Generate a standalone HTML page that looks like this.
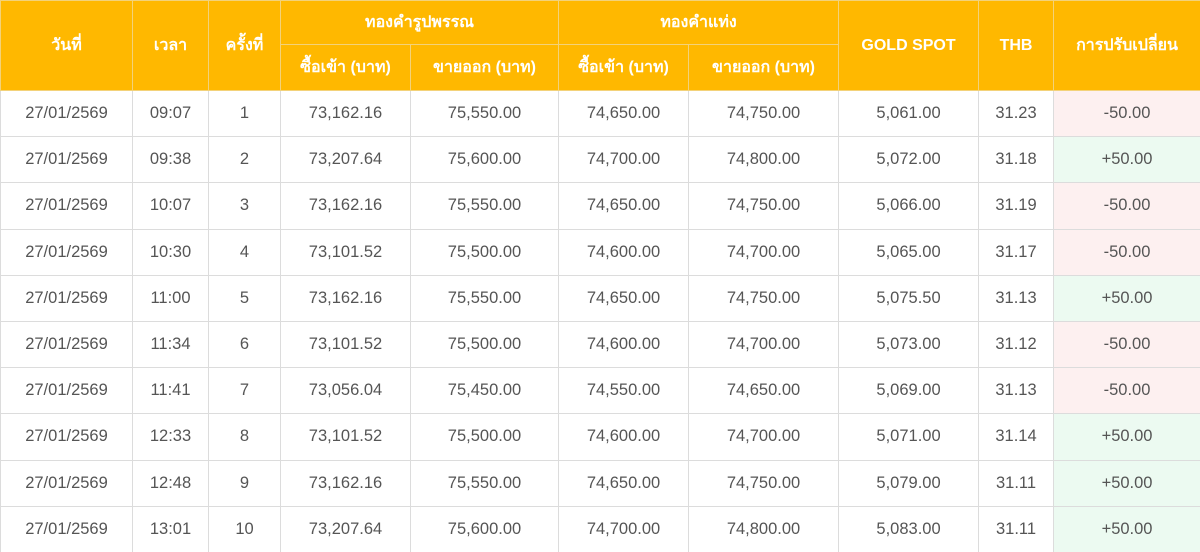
<!DOCTYPE html>
<html><head><meta charset="utf-8"><style>
html,body{margin:0;padding:0;width:1200px;height:552px;overflow:hidden;background:#fff}
table{border-collapse:collapse;table-layout:fixed;width:1200px;font-family:"Liberation Sans","DejaVu Sans",sans-serif}
th{background:#FFB800;color:#fff;font-weight:bold;font-size:16px;border:1px solid #f3d27a;padding:0;text-align:center}
td{color:#555;font-size:16.5px;text-align:center;border:1px solid #dcdcdc;padding:0;height:45.2px}
tr.h1 th{height:43px}
tr.h2 th{height:45px}
td.r{background:#fdf0f0}
td.g{background:#ecfaf1}
</style></head><body>
<table>
<colgroup><col style="width:132px"><col style="width:76px"><col style="width:72px"><col style="width:130px"><col style="width:148px"><col style="width:130px"><col style="width:150px"><col style="width:140px"><col style="width:75px"><col style="width:147px"></colgroup>
<tr class="h1"><th rowspan="2">วันที่</th><th rowspan="2">เวลา</th><th rowspan="2">ครั้งที่</th><th colspan="2">ทองคำรูปพรรณ</th><th colspan="2">ทองคำแท่ง</th><th rowspan="2">GOLD SPOT</th><th rowspan="2">THB</th><th rowspan="2">การปรับเปลี่ยน</th></tr>
<tr class="h2"><th>ซื้อเข้า (บาท)</th><th>ขายออก (บาท)</th><th>ซื้อเข้า (บาท)</th><th>ขายออก (บาท)</th></tr>
<tr><td>27/01/2569</td><td>09:07</td><td>1</td><td>73,162.16</td><td>75,550.00</td><td>74,650.00</td><td>74,750.00</td><td>5,061.00</td><td>31.23</td><td class="r">-50.00</td></tr>
<tr><td>27/01/2569</td><td>09:38</td><td>2</td><td>73,207.64</td><td>75,600.00</td><td>74,700.00</td><td>74,800.00</td><td>5,072.00</td><td>31.18</td><td class="g">+50.00</td></tr>
<tr><td>27/01/2569</td><td>10:07</td><td>3</td><td>73,162.16</td><td>75,550.00</td><td>74,650.00</td><td>74,750.00</td><td>5,066.00</td><td>31.19</td><td class="r">-50.00</td></tr>
<tr><td>27/01/2569</td><td>10:30</td><td>4</td><td>73,101.52</td><td>75,500.00</td><td>74,600.00</td><td>74,700.00</td><td>5,065.00</td><td>31.17</td><td class="r">-50.00</td></tr>
<tr><td>27/01/2569</td><td>11:00</td><td>5</td><td>73,162.16</td><td>75,550.00</td><td>74,650.00</td><td>74,750.00</td><td>5,075.50</td><td>31.13</td><td class="g">+50.00</td></tr>
<tr><td>27/01/2569</td><td>11:34</td><td>6</td><td>73,101.52</td><td>75,500.00</td><td>74,600.00</td><td>74,700.00</td><td>5,073.00</td><td>31.12</td><td class="r">-50.00</td></tr>
<tr><td>27/01/2569</td><td>11:41</td><td>7</td><td>73,056.04</td><td>75,450.00</td><td>74,550.00</td><td>74,650.00</td><td>5,069.00</td><td>31.13</td><td class="r">-50.00</td></tr>
<tr><td>27/01/2569</td><td>12:33</td><td>8</td><td>73,101.52</td><td>75,500.00</td><td>74,600.00</td><td>74,700.00</td><td>5,071.00</td><td>31.14</td><td class="g">+50.00</td></tr>
<tr><td>27/01/2569</td><td>12:48</td><td>9</td><td>73,162.16</td><td>75,550.00</td><td>74,650.00</td><td>74,750.00</td><td>5,079.00</td><td>31.11</td><td class="g">+50.00</td></tr>
<tr><td>27/01/2569</td><td>13:01</td><td>10</td><td>73,207.64</td><td>75,600.00</td><td>74,700.00</td><td>74,800.00</td><td>5,083.00</td><td>31.11</td><td class="g">+50.00</td></tr>
</table>
</body></html>
